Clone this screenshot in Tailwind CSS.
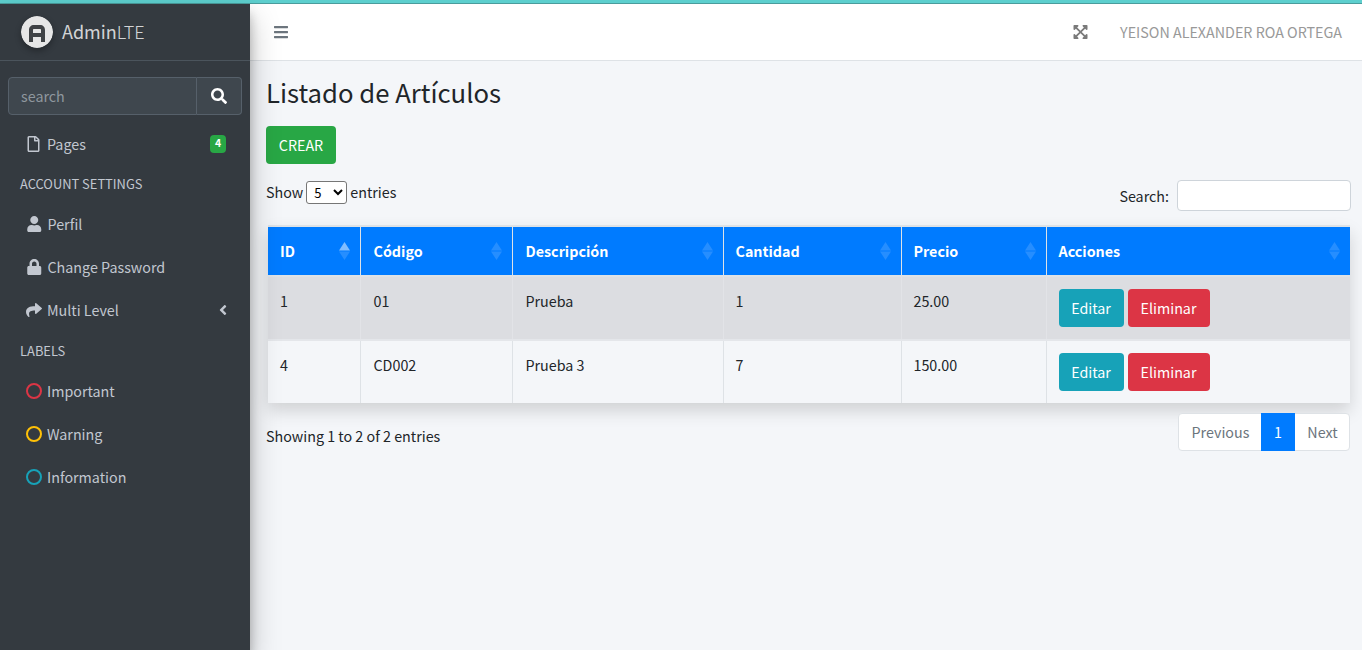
<!DOCTYPE html>
<html lang="es">

<head>
  <meta charset="UTF-8">
  <meta name="viewport" content="width=device-width, initial-scale=1.0">
  <title>Listado de Artículos</title>
  <script src="https://cdn.jsdelivr.net/npm/@tailwindcss/browser@4"></script>
</head>

<body class="h-[650px] overflow-hidden bg-[#f4f6f9] font-['Noto_Sans_CJK_SC','Noto_Sans',sans-serif] text-[14.3px] leading-6 text-[#212529]">

  <div class="h-1 bg-[#5dcfce] border-b border-b-[#4a9c9c]"></div>

  <div class="flex h-[646px]">
    <!-- sidebar -->
    <aside class="relative z-10 flex w-[250px] shrink-0 flex-col bg-[#343a40] text-[#c2c7d0] shadow-[0_14px_28px_rgba(0,0,0,0.25),0_10px_10px_rgba(0,0,0,0.22)]">
      <div class="flex h-[57px] items-center border-b border-b-[#4b545c] pl-[21px] pb-[1px]">
        <svg class="h-8 w-8 shrink-0 rounded-full shadow-[0_3px_6px_rgba(0,0,0,0.3)]" viewBox="0 0 32 32">
          <circle cx="16" cy="16" r="16" fill="#e6e6e6" />
          <path fill="#3f4245" fill-rule="evenodd" d="M13 9h6c3 0 5 2 5 5v12h-4v-5h-8v5H8V14c0-3 2-5 5-5zm-1 8h8v-3c0-.6-.4-1-1-1h-6c-.6 0-1 .4-1 1z" />
        </svg>
        <span class="-mt-[2px] ml-[9px] text-[18px] leading-[30px] text-[rgba(255,255,255,0.8)]">Admin<span class="font-light">LTE</span></span>
      </div>

      <div class="mt-4 flex h-[38px] px-2">
        <div class="flex w-[189px] items-center rounded-l-[4px] border border-[#56606a] bg-[#3f474e] pl-3 text-[#8f979e]">search</div>
        <div class="flex w-[45px] items-center justify-center rounded-r-[4px] border border-l-0 border-[#56606a] bg-[#3f474e]">
          <svg class="h-4 w-4" viewBox="0 0 512 512" fill="#fff"><path d="M505 442.700L405.300 343c-4.500-4.500-10.600-7-17-7H372c27.600-35.300 44-79.700 44-128C416 93.100 322.900 0 208 0S0 93.100 0 208s93.100 208 208 208c48.300 0 92.700-16.400 128-44v16.300c0 6.400 2.500 12.500 7 17l99.700 99.700c9.400 9.400 24.600 9.400 33.900 0l28.300-28.300c9.400-9.400 9.400-24.600.1-34zM208 336c-70.700 0-128-57.200-128-128 0-70.700 57.200-128 128-128 70.700 0 128 57.200 128 128 0 70.700-57.200 128-128 128z" /></svg>
        </div>
      </div>

      <nav class="mt-[7px] flex flex-col">
        <a class="flex h-[43px] items-center pl-[27px] pr-6">
          <svg class="mr-[7px] h-4 w-[13px]" viewBox="0 0 384 512" fill="#c2c7d0"><path d="M369.900 97.900L286 14C277 5 264.800-.1 252.100-.1H48C21.500 0 0 21.500 0 48v416c0 26.500 21.500 48 48 48h288c26.500 0 48-21.500 48-48V131.900c0-12.700-5.100-25-14.100-34zM332.100 128H256V51.900l76.100 76.100zM48 464V48h160v104c0 13.300 10.700 24 24 24h104v288H48z" /></svg>
          <span>Pages</span>
          <span class="ml-auto flex h-[18px] w-4 items-center justify-center rounded-[4px] bg-[#28a745] text-[10.500px] font-bold leading-none text-white">4</span>
        </a>
        <p class="flex h-[37px] items-center pl-5 text-[12.900px]">ACCOUNT SETTINGS</p>
        <a class="flex h-[43px] items-center pl-[27px]">
          <svg class="mr-[6px] h-4 w-[14.500px]" viewBox="0 0 448 512" fill="#c2c7d0"><path d="M224 256c70.700 0 128-57.300 128-128S294.700 0 224 0 96 57.300 96 128s57.300 128 128 128zm89.600 32h-16.700c-22.200 10.200-46.900 16-72.900 16s-50.600-5.800-72.900-16h-16.700C60.200 288 0 348.200 0 422.400V464c0 26.500 21.500 48 48 48h352c26.500 0 48-21.500 48-48v-41.600c0-74.200-60.200-134.400-134.400-134.400z" /></svg>
          <span>Perfil</span>
        </a>
        <a class="flex h-[43px] items-center pl-[27px]">
          <svg class="mr-[6px] h-4 w-[14.500px]" viewBox="0 0 448 512" fill="#c2c7d0"><path d="M400 224h-24v-72C376 68.200 307.800 0 224 0S72 68.200 72 152v72H48c-26.500 0-48 21.500-48 48v192c0 26.500 21.500 48 48 48h352c26.500 0 48-21.500 48-48V272c0-26.500-21.500-48-48-48zm-104 0H152v-72c0-39.700 32.300-72 72-72s72 32.300 72 72v72z" /></svg>
          <span>Change Password</span>
        </a>
        <a class="flex h-[43px] items-center pl-[26px] pr-[23px]">
          <svg class="mr-[5px] h-4 w-4" viewBox="0 0 512 512" fill="#c2c7d0"><path d="M503.691 189.836L327.687 37.851C312.281 24.546 288 35.347 288 56.015v80.053C127.371 137.907 0 170.100 0 322.326c0 61.441 39.581 122.309 83.333 154.132 13.653 9.931 33.111-2.533 28.077-18.631C66.066 312.814 132.917 274.316 288 272.085V360c0 20.700 24.300 31.453 39.687 18.164l176.004-152c11.071-9.562 11.086-26.753 0-36.328z" /></svg>
          <span>Multi Level</span>
          <svg class="ml-auto h-4 w-2" viewBox="0 0 256 512" fill="#c2c7d0"><path d="M31.700 239l136-136c9.400-9.400 24.600-9.400 33.900 0l22.600 22.600c9.400 9.400 9.400 24.600 0 33.900L127.900 256l96.400 96.400c9.400 9.400 9.400 24.600 0 33.900L201.700 409c-9.400 9.400-24.600 9.400-33.900 0l-136-136c-9.500-9.400-9.500-24.600-.1-34z" /></svg>
        </a>
        <p class="flex h-[38px] items-center pl-5 pt-[2px] text-[12.900px]">LABELS</p>
        <a class="flex h-[43px] items-center pl-[26px]">
          <span class="mr-[5px] h-4 w-4 rounded-full border-2 border-[#dc3545]"></span>
          <span>Important</span>
        </a>
        <a class="flex h-[43px] items-center pl-[26px]">
          <span class="mr-[5px] h-4 w-4 rounded-full border-2 border-[#ffc107]"></span>
          <span>Warning</span>
        </a>
        <a class="flex h-[43px] items-center pl-[26px]">
          <span class="mr-[5px] h-4 w-4 rounded-full border-2 border-[#17a2b8]"></span>
          <span>Information</span>
        </a>
      </nav>
    </aside>

    <!-- main -->
    <div class="flex min-w-0 flex-1 flex-col">
      <header class="flex h-[57px] shrink-0 items-center border-b border-b-[#dee2e6] bg-white pl-6 pr-5">
        <svg class="h-4 w-[14px]" viewBox="0 0 448 512" fill="#6c757d"><path d="M16 132h416c8.837 0 16-7.163 16-16V76c0-8.837-7.163-16-16-16H16C7.163 60 0 67.163 0 76v40c0 8.837 7.163 16 16 16zm0 160h416c8.837 0 16-7.163 16-16v-40c0-8.837-7.163-16-16-16H16c-8.837 0-16 7.163-16 16v40c0 8.837 7.163 16 16 16zm0 160h416c8.837 0 16-7.163 16-16v-40c0-8.837-7.163-16-16-16H16c-8.837 0-16 7.163-16 16v40c0 8.837 7.163 16 16 16z" /></svg>
        <svg class="ml-auto mr-8 h-4 w-[15px]" viewBox="0 0 448 512" fill="#7a7a7a"><path d="M448 344v112a23.940 23.940 0 0 1-24 24H312c-21.390 0-32.090-25.900-17-41l36.200-36.200L224 295.600 116.770 402.900 153 439c15.090 15.100 4.390 41-17 41H24a23.940 23.940 0 0 1-24-24V344c0-21.400 25.890-32.100 41-17l36.190 36.200L184.460 256 77.180 148.700 41 185c-15.100 15.100-41 4.400-41-17V56a23.940 23.940 0 0 1 24-24h112c21.390 0 32.090 25.900 17 41l-36.200 36.200L224 216.400l107.230-107.300L295 73c-15.090-15.100-4.390-41 17-41h112a23.940 23.940 0 0 1 24 24v112c0 21.400-25.890 32.100-41 17l-36.190-36.200L263.540 256l107.280 107.300L407 327.100c15.100-15.200 41-4.500 41 16.900z" /></svg>
        <span class="text-[#999]">YEISON ALEXANDER ROA ORTEGA</span>
      </header>

      <main class="flex flex-1 flex-col pl-4 pr-[11px]">
        <h1 class="mt-[11px] text-[25.700px] leading-[40px]">Listado de Artículos</h1>
        <button class="mt-[14px] h-[38px] w-[70px] rounded-[4px] bg-[#28a745] text-white">CREAR</button>

        <div class="mt-4 flex items-start justify-between">
          <label class="flex items-center">Show
            <select class="mx-[3px] h-[23px] w-[41px] rounded-[3px] border border-[#767676] bg-white pl-[3px] text-[13px] leading-none text-black">
              <option>5</option>
            </select>
            entries</label>
          <label class="flex items-center">Search:
            <input type="text" class="ml-2 h-[31px] w-[174px] rounded-[4px] border border-[#ced4da] bg-white">
          </label>
        </div>

        <div class="mt-[14px] ml-[2px] w-[1082px] shadow-[0_8px_16px_rgba(0,0,0,0.15)]">
          <table class="w-full table-fixed border-collapse">
            <thead class="border-y-2 border-[#dee2e6]">
              <tr class="h-[50px] bg-[#007bff] text-left text-white">
                <th class="w-[92px] pl-3 font-bold">
                  <div class="flex items-center justify-between pr-[10px]">ID
                    <svg class="h-[18px] w-[11px]" viewBox="0 0 11 18"><path d="M5.500 0L11 8.500H0z" fill="rgba(255,255,255,0.5)" /><path d="M5.500 18L11 9.500H0z" fill="rgba(255,255,255,0.15)" /></svg>
                  </div>
                </th>
                <th class="w-[152px] border-l border-l-[#dee2e6] pl-[13px] font-bold">
                  <div class="flex items-center justify-between pr-[10px]">Código
                    <svg class="h-[18px] w-[11px]" viewBox="0 0 11 18"><path d="M5.500 0L11 8.500H0z" fill="rgba(255,255,255,0.15)" /><path d="M5.500 18L11 9.500H0z" fill="rgba(255,255,255,0.15)" /></svg>
                  </div>
                </th>
                <th class="w-[211px] border-l border-l-[#dee2e6] pl-[13px] font-bold">
                  <div class="flex items-center justify-between pr-[10px]">Descripción
                    <svg class="h-[18px] w-[11px]" viewBox="0 0 11 18"><path d="M5.500 0L11 8.500H0z" fill="rgba(255,255,255,0.15)" /><path d="M5.500 18L11 9.500H0z" fill="rgba(255,255,255,0.15)" /></svg>
                  </div>
                </th>
                <th class="w-[178px] border-l border-l-[#dee2e6] pl-3 font-bold">
                  <div class="flex items-center justify-between pr-[10px]">Cantidad
                    <svg class="h-[18px] w-[11px]" viewBox="0 0 11 18"><path d="M5.500 0L11 8.500H0z" fill="rgba(255,255,255,0.15)" /><path d="M5.500 18L11 9.500H0z" fill="rgba(255,255,255,0.15)" /></svg>
                  </div>
                </th>
                <th class="w-[145px] border-l border-l-[#dee2e6] pl-3 font-bold">
                  <div class="flex items-center justify-between pr-[10px]">Precio
                    <svg class="h-[18px] w-[11px]" viewBox="0 0 11 18"><path d="M5.500 0L11 8.500H0z" fill="rgba(255,255,255,0.15)" /><path d="M5.500 18L11 9.500H0z" fill="rgba(255,255,255,0.15)" /></svg>
                  </div>
                </th>
                <th class="border-l border-l-[#dee2e6] pl-3 font-bold">
                  <div class="flex items-center justify-between pr-[10px]">Acciones
                    <svg class="h-[18px] w-[11px]" viewBox="0 0 11 18"><path d="M5.500 0L11 8.500H0z" fill="rgba(255,255,255,0.15)" /><path d="M5.500 18L11 9.500H0z" fill="rgba(255,255,255,0.15)" /></svg>
                  </div>
                </th>
              </tr>
            </thead>
            <tbody>
              <tr class="h-[64px] border-b-2 border-b-[#e4e6ea] bg-[#dcdde1] align-top">
                <td class="pl-3 pt-3">1</td>
                <td class="border-l border-l-[#e2e3e7] pl-[13px] pt-3">01</td>
                <td class="border-l border-l-[#e2e3e7] pl-[13px] pt-3">Prueba</td>
                <td class="border-l border-l-[#e2e3e7] pl-3 pt-3">1</td>
                <td class="border-l border-l-[#e2e3e7] pl-3 pt-3">25.00</td>
                <td class="border-l border-l-[#e2e3e7] pl-3 pt-3">
                  <div class="flex gap-1">
                    <button class="h-[38px] w-[65px] rounded-[4px] bg-[#17a2b8] text-white">Editar</button>
                    <button class="h-[38px] w-[82px] rounded-[4px] bg-[#dc3545] text-white">Eliminar</button>
                  </div>
                </td>
              </tr>
              <tr class="h-[63px] bg-[#f4f6f9] align-top">
                <td class="pl-3 pt-3">4</td>
                <td class="border-l border-l-[#dee2e6] pl-[13px] pt-3">CD002</td>
                <td class="border-l border-l-[#dee2e6] pl-[13px] pt-3">Prueba 3</td>
                <td class="border-l border-l-[#dee2e6] pl-3 pt-3">7</td>
                <td class="border-l border-l-[#dee2e6] pl-3 pt-3">150.00</td>
                <td class="border-l border-l-[#dee2e6] pl-3 pt-3">
                  <div class="flex gap-1">
                    <button class="h-[38px] w-[65px] rounded-[4px] bg-[#17a2b8] text-white">Editar</button>
                    <button class="h-[38px] w-[82px] rounded-[4px] bg-[#dc3545] text-white">Eliminar</button>
                  </div>
                </td>
              </tr>
            </tbody>
          </table>
        </div>

        <div class="mt-[10px] flex items-start justify-between">
          <p class="mt-[11px]">Showing 1 to 2 of 2 entries</p>
          <div class="mr-[1px] flex h-[38px] rounded-[4px] border border-[#dee2e6] bg-white">
            <span class="flex w-[82px] items-center justify-center pl-[1px] text-[#6c757d]">Previous</span>
            <span class="-my-[1px] flex w-[34px] items-center justify-center bg-[#007bff] text-white">1</span>
            <span class="flex w-[54px] items-center justify-center pl-[1px] text-[#6c757d]">Next</span>
          </div>
        </div>
      </main>
    </div>
  </div>

</body>

</html>
